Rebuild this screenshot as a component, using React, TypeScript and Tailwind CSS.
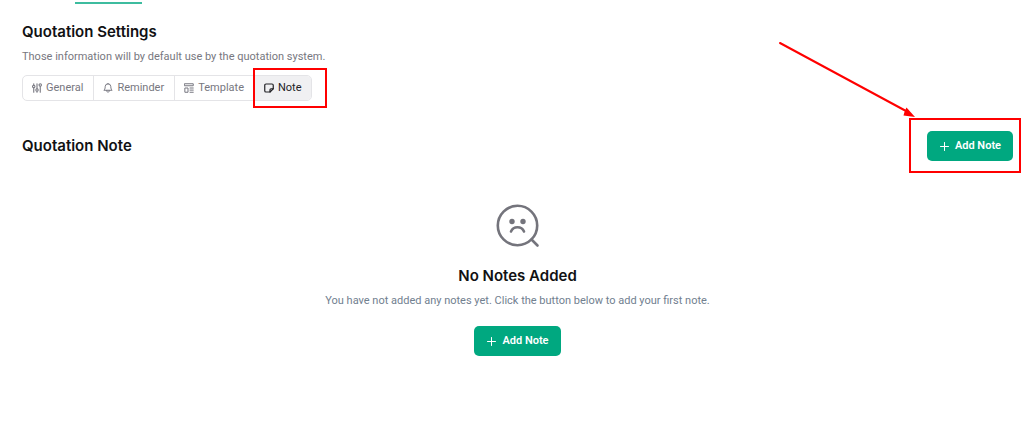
import type { ReactNode } from "react";

type TabItem = {
  id: string;
  label: string;
  icon: ReactNode;
};

function FadersIcon() {
  return (
    <svg viewBox="0 0 20 20" className="size-[10px]" fill="none" stroke="currentColor" strokeWidth="2.200" strokeLinecap="round" aria-hidden="true">
      <path d="M3.500 1.500v3M3.500 10v8.500M10 1.500v10M10 17v1.500M16.500 7v11.500" />
      <circle cx="3.500" cy="7" r="2.400" />
      <circle cx="10" cy="14" r="2.400" />
      <circle cx="16.500" cy="4" r="2.400" />
    </svg>
  );
}

function BellIcon() {
  return (
    <svg viewBox="0 0 20 20" className="size-[10px]" fill="none" stroke="currentColor" strokeWidth="2" strokeLinecap="round" strokeLinejoin="round" aria-hidden="true">
      <path d="M10 1.500a5.600 5.600 0 0 0-5.600 5.600c0 4-1.200 6-2.600 7.400h16.400c-1.400-1.400-2.600-3.400-2.600-7.400A5.600 5.600 0 0 0 10 1.500z" />
      <path d="M7.500 15c0 2 1 3.500 2.500 3.500s2.500-1.500 2.500-3.500" />
    </svg>
  );
}

function TemplateIcon() {
  return (
    <svg viewBox="0 0 20 20" className="size-[10px]" fill="none" stroke="currentColor" strokeWidth="2" strokeLinecap="round" strokeLinejoin="round" aria-hidden="true">
      <path d="M1.500 1.500h17v4h-17zM2.500 10h5.500v8.500h-5.500zM12 10h6.500M12 14.200h6.500M12 18.500h6.500" />
    </svg>
  );
}

function NoteIcon() {
  return (
    <svg viewBox="0 0 20 20" className="size-[10px]" fill="none" stroke="currentColor" strokeWidth="2.400" strokeLinecap="round" strokeLinejoin="round" aria-hidden="true">
      <path d="M12 18H4a2.500 2.500 0 0 1-2.500-2.500v-11A2.500 2.500 0 0 1 4 2h12a2.500 2.500 0 0 1 2.500 2.500V11.500z" />
      <path d="M12 18v-4.500a2 2 0 0 1 2-2h4.500" />
    </svg>
  );
}

function SadSearchIcon() {
  return (
    <svg viewBox="0 0 44 44" className="size-11" fill="none" stroke="currentColor" strokeWidth="2.600" strokeLinecap="round" aria-hidden="true">
      <circle cx="21.500" cy="21.500" r="19.700" />
      <path d="M35.500 35.500l6 6" />
      <path d="M15 27.500c2.400-5.600 10.600-5.600 13 0" />
      <circle cx="16" cy="17.500" r="2.700" fill="currentColor" stroke="none" />
      <circle cx="27" cy="17.500" r="2.700" fill="currentColor" stroke="none" />
    </svg>
  );
}

const TABS: TabItem[] = [
  { id: "general", label: "General", icon: <FadersIcon /> },
  { id: "reminder", label: "Reminder", icon: <BellIcon /> },
  { id: "template", label: "Template", icon: <TemplateIcon /> },
  { id: "note", label: "Note", icon: <NoteIcon /> },
];

function AddNoteButton() {
  return (
    <button
      type="button"
      className="flex h-[30px] items-center gap-1 rounded-[5px] bg-[#00a880] px-3 text-[11px] leading-4 font-semibold text-white"
    >
      <svg viewBox="0 0 12 12" className="size-3" fill="none" stroke="currentColor" strokeLinecap="round" aria-hidden="true">
        <path d="M5.500 2.500v8M1.500 6.500h8" />
      </svg>
      Add Note
    </button>
  );
}

export default function App() {
  const active = "note";

  return (
    <main className="bg-white pr-[11px] pl-[22px] font-['Roboto','Inter',sans-serif] text-[#111113]">
      <div className="flex h-5 items-start pt-[2px] pl-[53px]">
        <div className="h-[2px] w-[67px] bg-[#3dbc9f]" />
      </div>

      <header>
        <h1 className="font-['Inter',sans-serif] text-[15px] leading-6 font-semibold">Quotation Settings</h1>
        <p className="pt-[5px] text-[11px] leading-4 text-[#777780]">
          Those information will by default use by the quotation system.
        </p>
      </header>

      <nav aria-label="Quotation settings" className="mt-[10px] flex">
        <div className="flex h-[26px] rounded-[5px] border border-[#e4e4e7]">
          {TABS.map((tab) => (
            <div key={tab.id} className="relative flex border-l border-[#e4e4e7] first:border-l-0">
              <button
                type="button"
                aria-current={tab.id === active ? "page" : undefined}
                className={
                  tab.id === active
                    ? "flex items-center gap-1 rounded-r-[4px] bg-[#f0f0f2] px-[9px] text-[11px] leading-4 text-[#222226]"
                    : "flex items-center gap-1 pr-[10px] pl-[9px] text-[11px] leading-4 text-[#777780]"
                }
              >
                {tab.icon}
                {tab.label}
              </button>
              {tab.id === active && (
                <div className="pointer-events-none absolute -top-2 -right-4 -bottom-2 -left-[2px] border-2 border-[#ff0000]" />
              )}
            </div>
          ))}
        </div>
      </nav>

      <section className="mt-[30px]">
        <div className="flex items-center justify-between">
          <h2 className="font-['Inter',sans-serif] text-[15px] leading-6 font-semibold">Quotation Note</h2>
          <div className="relative">
            <AddNoteButton />
            <div className="pointer-events-none absolute -top-[13px] -right-2 -bottom-3 -left-[18px] border-2 border-[#ff0000]" />
            <svg viewBox="0 0 138 78" className="pointer-events-none absolute right-[97px] bottom-[42px] h-[78px] w-[138px]" aria-hidden="true">
              <path d="M2 2L128 70" stroke="#ff0000" strokeWidth="2" strokeLinecap="round" />
              <path d="M137 76l-11.500-1.500 1-3.500 2-4.500z" fill="#ff0000" />
            </svg>
          </div>
        </div>

        <div className="flex flex-col items-center pt-[43px] pb-6 text-center">
          <div className="text-[#74747c]">
            <SadSearchIcon />
          </div>
          <h3 className="mt-4 font-['Inter',sans-serif] text-[15px] leading-6 font-semibold">No Notes Added</h3>
          <p className="mt-[5px] text-[11px] leading-4 text-[#71808f]">
            You have not added any notes yet. Click the button below to add your first note.
          </p>
          <div className="mt-[17px]">
            <AddNoteButton />
          </div>
        </div>
      </section>
    </main>
  );
}
